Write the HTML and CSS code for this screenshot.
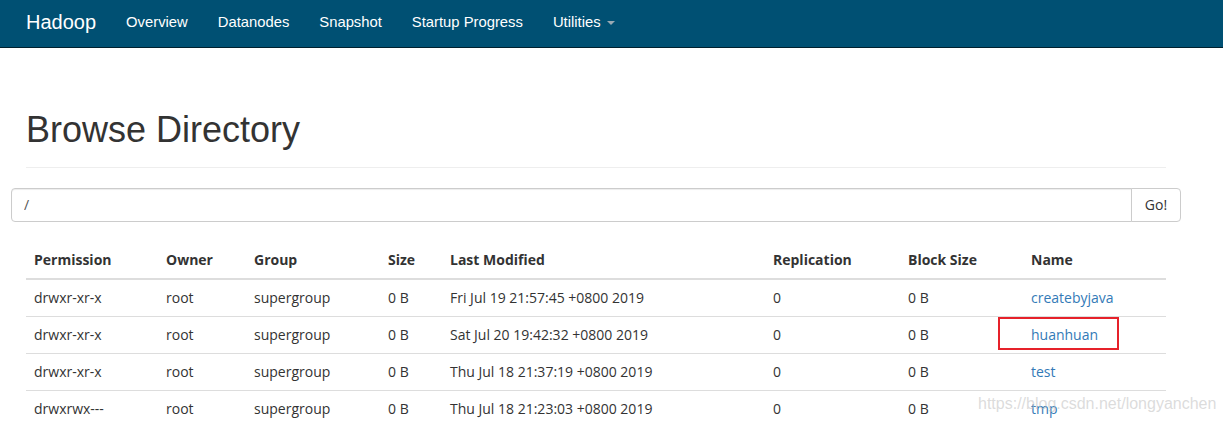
FILE: index.html
```html
<!DOCTYPE html>
<html lang="en">
<head>
<meta charset="utf-8">
<title>Browsing HDFS</title>
<link rel="stylesheet" href="styles.css">
</head>
<body>
<nav class="navbar">
  <div class="nav-inner">
    <a class="brand" href="#">Hadoop</a>
    <ul class="nav-list">
      <li><a class="nav-link" href="#">Overview</a></li>
      <li><a class="nav-link" href="#">Datanodes</a></li>
      <li><a class="nav-link" href="#">Snapshot</a></li>
      <li><a class="nav-link" href="#">Startup Progress</a></li>
      <li><a class="nav-link" href="#">Utilities <span class="caret"></span></a></li>
    </ul>
  </div>
</nav>

<main class="container">
  <div class="page-header">
    <h1>Browse Directory</h1>
  </div>

  <div class="input-group">
    <input class="path-input" type="text" value="/">
    <button class="go-btn" type="button">Go!</button>
  </div>

  <table class="table">
    <colgroup>
      <col class="c-perm"><col class="c-owner"><col class="c-group"><col class="c-size">
      <col class="c-mod"><col class="c-rep"><col class="c-block"><col class="c-name">
    </colgroup>
    <thead>
      <tr>
        <th>Permission</th><th>Owner</th><th>Group</th><th>Size</th>
        <th>Last Modified</th><th>Replication</th><th>Block Size</th><th>Name</th>
      </tr>
    </thead>
    <tbody>
      <tr>
        <td>drwxr-xr-x</td><td>root</td><td>supergroup</td><td>0 B</td>
        <td>Fri Jul 19 21:57:45 +0800 2019</td><td>0</td><td>0 B</td>
        <td><a class="file-link" href="#">createbyjava</a></td>
      </tr>
      <tr>
        <td>drwxr-xr-x</td><td>root</td><td>supergroup</td><td>0 B</td>
        <td>Sat Jul 20 19:42:32 +0800 2019</td><td>0</td><td>0 B</td>
        <td class="name-cell"><span class="highlight-box"></span><a class="file-link" href="#">huanhuan</a></td>
      </tr>
      <tr>
        <td>drwxr-xr-x</td><td>root</td><td>supergroup</td><td>0 B</td>
        <td>Thu Jul 18 21:37:19 +0800 2019</td><td>0</td><td>0 B</td>
        <td><a class="file-link" href="#">test</a></td>
      </tr>
      <tr>
        <td>drwxrwx---</td><td>root</td><td>supergroup</td><td>0 B</td>
        <td>Thu Jul 18 21:23:03 +0800 2019</td><td>0</td><td>0 B</td>
        <td><a class="file-link" href="#">tmp</a></td>
      </tr>
    </tbody>
  </table>
</main>

<div class="watermark">https://blog.csdn.net/longyanchen</div>
</body>
</html>
```

FILE: styles.css
```css
* { box-sizing: border-box; }

html, body {
  margin: 0;
  padding: 0;
  background: #fff;
}

body {
  font-family: "Open Sans", "Noto Sans", sans-serif;
  font-size: 14px;
  color: #333;
  position: relative;
  overflow: hidden;
  height: 422px;
}

a { text-decoration: none; }

/* Navbar */
.navbar {
  background: #005073;
  border-bottom: 1px solid #00202e;
  height: 48px;
}

.nav-inner {
  display: flex;
  align-items: flex-start;
  padding-left: 11px;
}

.brand {
  font-family: "Liberation Sans", Arial, sans-serif;
  font-size: 20px;
  line-height: 45px;
  color: #fff;
  padding: 0 15px;
}

.nav-list {
  list-style: none;
  margin: 0;
  padding: 0;
  display: flex;
}

.nav-link {
  display: block;
  font-family: "Liberation Sans", Arial, sans-serif;
  font-size: 14.8px;
  line-height: 45px;
  color: #fff;
  padding: 0 15px;
}

.caret {
  display: inline-block;
  width: 0;
  height: 0;
  margin-left: 2px;
  vertical-align: middle;
  border-top: 4px solid #9aa9b3;
  border-left: 4px solid transparent;
  border-right: 4px solid transparent;
}

/* Main */
.container {
  width: 1170px;
  margin-left: 11px;
  padding: 0 15px;
}

.page-header {
  padding-bottom: 17px;
  border-bottom: 1px solid #eee;
}

.page-header h1 {
  margin: 62px 0 0;
  font-family: "Liberation Sans", Arial, sans-serif;
  font-size: 36px;
  font-weight: normal;
  line-height: 1.1;
  color: #333;
}

.input-group {
  display: flex;
  margin: 20px -15px 0;
  height: 34px;
}

.path-input {
  flex: 1;
  height: 34px;
  border: 1px solid #ccc;
  border-radius: 4px 0 0 4px;
  padding: 6px 12px;
  font-family: "Open Sans", "Noto Sans", sans-serif;
  font-size: 14px;
  color: #555;
  outline: none;
  box-shadow: inset 0 1px 1px rgba(0,0,0,0.075);
}

.go-btn {
  width: 50px;
  height: 34px;
  margin-left: -1px;
  border: 1px solid #ccc;
  border-radius: 0 4px 4px 0;
  background: #fff;
  font-family: "Open Sans", "Noto Sans", sans-serif;
  font-size: 14px;
  color: #333;
  padding: 0;
}

/* Table */
.table {
  margin-top: 20px;
  width: 1140px;
  border-collapse: collapse;
  table-layout: fixed;
}

.c-perm { width: 132px; }
.c-owner { width: 88px; }
.c-group { width: 134px; }
.c-size { width: 62px; }
.c-mod { width: 323px; }
.c-rep { width: 135px; }
.c-block { width: 123px; }
.c-name { width: 143px; }

.table th,
.table td {
  padding: 8px;
  line-height: 20px;
  text-align: left;
  vertical-align: top;
  white-space: nowrap;
}

.table th {
  font-weight: bold;
  border-bottom: 2px solid #ddd;
}

.table td {
  border-top: 1px solid #ddd;
}

.file-link {
  color: #337ab7;
}

.name-cell {
  position: relative;
}

.highlight-box {
  position: absolute;
  top: 0;
  left: -25px;
  width: 121px;
  height: 33px;
  border: 2px solid #e6212a;
}

.watermark {
  position: absolute;
  left: 978px;
  top: 395px;
  font-family: "Liberation Sans", Arial, sans-serif;
  font-size: 16px;
  color: rgba(190, 190, 190, 0.55);
  pointer-events: none;
}
```
